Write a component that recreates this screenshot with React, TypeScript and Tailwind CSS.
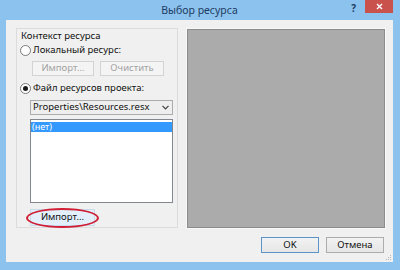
import React from "react";

const font = { fontFamily: '"Noto Sans", "Open Sans", sans-serif' };

function Radio({ checked }: { checked?: boolean }) {
  return (
    <span className="w-[11px] h-[11px] rounded-full border border-[#7a7a7a] bg-white flex items-center justify-center shrink-0">
      {checked && <span className="w-[5px] h-[5px] rounded-full bg-[#1b1b1b]" />}
    </span>
  );
}

function DisabledButton({ label, w }: { label: string; w: string }) {
  return (
    <div
      className={`${w} h-[15px] border border-[#d3d3d3] bg-[#f4f4f4] text-[#a3a3a3] flex items-center justify-center text-[9.5px]`}
    >
      {label}
    </div>
  );
}

export default function App() {
  return (
    <div
      className="w-[400px] h-[270px] bg-[#8cc3ee] flex flex-col pl-[6px] pr-[7px] pb-[8px] text-[#111] overflow-hidden"
      style={font}
    >
      {/* Title bar */}
      <div className="relative h-[20px] flex items-center justify-center shrink-0">
        <span className="text-[10.5px] text-[#1f3b63] leading-none">Выбор ресурса</span>
        <span className="absolute right-[37px] top-[3px] text-[10px] font-bold text-[#1f3b63] leading-none">
          ?
        </span>
        <div className="absolute right-[0px] top-0 w-[28px] h-[13px] bg-[#c9524d] flex items-center justify-center">
          <svg width="7" height="7" viewBox="0 0 7 7">
            <path d="M1 1 L6 6 M6 1 L1 6" stroke="white" strokeWidth="1.4" />
          </svg>
        </div>
      </div>

      {/* Client area */}
      <div className="relative flex-1 bg-[#f0f0f0] flex flex-col">
        <div className="flex pt-[8px] pl-[10px] pr-[8px] gap-[9px]">
          {/* Group box */}
          <div className="w-[162px] h-[200px] border border-[#dcdcdc] flex flex-col shrink-0">
            <div className="h-[14px] leading-[14px] pl-[4px] text-[9.5px]">Контекст ресурса</div>

            <div className="mt-[1px] h-[12px] flex items-center gap-[2px] pl-[3px] text-[9.5px]">
              <Radio />
              <span>Локальный ресурс:</span>
            </div>

            <div className="mt-[5px] flex gap-[6px] pl-[15px]">
              <DisabledButton label="Импорт..." w="w-[62px]" />
              <DisabledButton label="Очистить" w="w-[64px]" />
            </div>

            <div className="mt-[6px] h-[12px] flex items-center gap-[2px] pl-[3px] text-[9.5px]">
              <Radio checked />
              <span>Файл ресурсов проекта:</span>
            </div>

            <div className="mt-[6px] ml-[13px] w-[143px] h-[15px] border border-[#acacac] bg-[#eeeeee] flex items-center pl-[2px] pr-[3px] text-[9.5px]">
              <span className="flex-1">Properties\Resources.resx</span>
              <svg width="7" height="5" viewBox="0 0 7 5">
                <path d="M0.5 0.8 L3.5 3.8 L6.5 0.8" stroke="#404040" strokeWidth="1.2" fill="none" />
              </svg>
            </div>

            <div className="mt-[4px] ml-[13px] w-[143px] h-[84px] border border-[#828790] bg-white pt-[2px]">
              <div className="h-[10px] bg-[#3399ff] text-white text-[9px] leading-[10px] pl-[1px]">(нет)</div>
            </div>

            <div className="relative mt-[6px] ml-[13px] w-[65px] h-[17px] border border-[#c8dcee] bg-[#e3f0fb] flex items-center justify-center text-[9.5px]">
              Импорт...
              <div className="absolute left-[-5px] top-[-2px] w-[73px] h-[20px] rounded-[50%] border-[2px] border-[#d01f35]" />
            </div>
          </div>

          {/* Preview panel */}
          <div className="mt-[1px] w-[198px] h-[199px] bg-[#ababab] border border-[#8c8c8c] outline outline-1 outline-[#f8f8f8]" />
        </div>

        {/* Buttons */}
        <div className="mt-[9px] flex justify-end gap-[7px] pr-[9px]">
          <div className="w-[58px] h-[16px] border border-[#5a94c8] bg-gradient-to-b from-[#f2f2f2] to-[#e6e6e6] flex items-center justify-center text-[9.5px]">
            OK
          </div>
          <div className="w-[58px] h-[16px] border border-[#acacac] bg-gradient-to-b from-[#f2f2f2] to-[#e6e6e6] flex items-center justify-center text-[9.5px]">
            Отмена
          </div>
        </div>

        {/* Resize grip */}
        <svg className="absolute right-[1px] bottom-[1px]" width="6" height="6" viewBox="0 0 6 6">
          <rect x="4" y="0" width="1" height="1" fill="#b8b8b8" />
          <rect x="2" y="2" width="1" height="1" fill="#b8b8b8" />
          <rect x="4" y="2" width="1" height="1" fill="#b8b8b8" />
          <rect x="0" y="4" width="1" height="1" fill="#b8b8b8" />
          <rect x="2" y="4" width="1" height="1" fill="#b8b8b8" />
          <rect x="4" y="4" width="1" height="1" fill="#b8b8b8" />
        </svg>
      </div>
    </div>
  );
}
